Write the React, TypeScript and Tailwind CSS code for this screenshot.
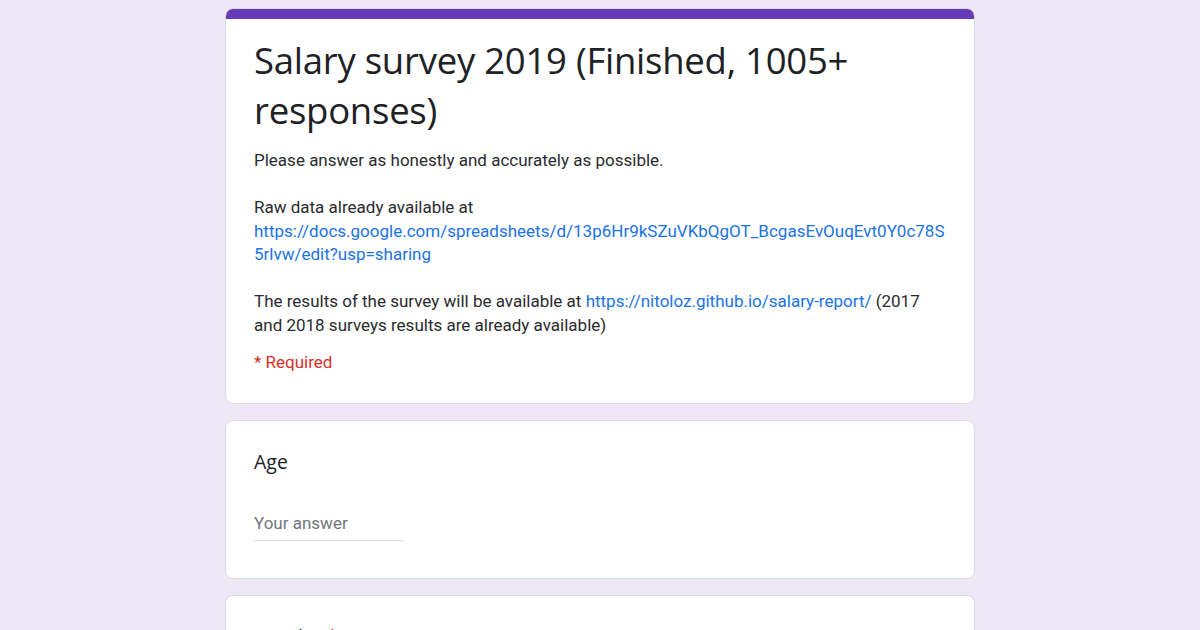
export default function App() {
  return (
    <div className="min-h-[630px] h-[630px] overflow-hidden bg-[#ede7f6] font-['Roboto',sans-serif]">
      <div className="mx-auto w-[750px] pt-2 flex flex-col gap-4">
        {/* header card */}
        <div className="bg-white rounded-lg border border-[#dadce0] overflow-hidden">
          <div className="h-[10px] bg-[#673ab7]" />
          <div className="px-7 pt-[16px] pb-[30px]">
            <h1 className="font-['Open_Sans',sans-serif] text-[36.5px] leading-[50px] text-[#202124] tracking-[-0.25px]">
              Salary survey 2019 (Finished, 1005+ responses)
            </h1>
            <div className="mt-[14px] text-[17px] leading-[23.5px] text-[#2a2b2e]">
              <p>Please answer as honestly and accurately as possible.</p>
              <p className="mt-[23.5px]">
                Raw data already available at{' '}
                <span className="text-[#1a73e8] break-words">
                  https://docs.google.com/spreadsheets/d/13p6Hr9kSZuVKbQgOT_BcgasEvOuqEvt0Y0c78S5rlvw/edit?usp=sharing
                </span>
              </p>
              <p className="mt-[23.5px]">
                The results of the survey will be available at{' '}
                <span className="text-[#1a73e8]">https://nitoloz.github.io/salary-report/</span> (2017
                and 2018 surveys results are already available)
              </p>
            </div>
            <p className="mt-[14px] text-[17px] leading-[22px] text-[#d93025]">* Required</p>
          </div>
        </div>

        {/* Age */}
        <div className="bg-white rounded-lg border border-[#dadce0] px-7 pt-[29px] pb-[37px]">
          <p className="font-['Open_Sans',sans-serif] text-[19.5px] leading-6 text-[#202124]">Age</p>
          <div className="mt-[37px] w-[150px] border-b border-[#dadce0] pb-[5px] text-[17px] leading-6 text-[#70757a]">
            Your answer
          </div>
        </div>

        {/* Gender */}
        <div className="bg-white rounded-lg border border-[#dadce0] px-7 pt-[29px] pb-[37px]">
          <p className="font-['Open_Sans',sans-serif] text-[19.5px] leading-6 text-[#202124]">
            Gender <span className="text-[#d93025]">*</span>
          </p>
        </div>
      </div>
    </div>
  );
}
